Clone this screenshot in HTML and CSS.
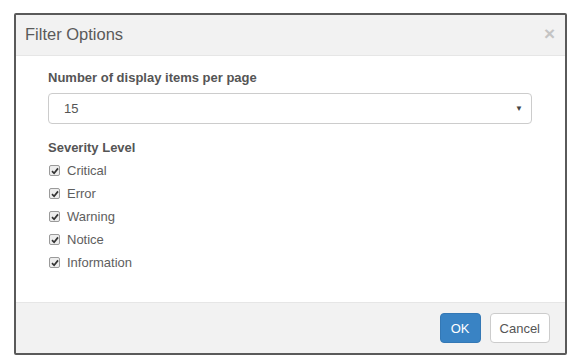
FILE: index.html
```html
<!DOCTYPE html>
<html>
  <head>
    <link rel="stylesheet" href="styles.css">
  </head>
  <body>
  <div class='backdrop'>
    <section class='modal'>
      <header class='modal-header'>
        <h4 class='modal-title'>Filter Options</h4>
        <span class='close'>&times;</span>
      </header>
      <div class='modal-body'>
        <p class='field-label'>Number of display items per page</p>
        <div class='select'>
          <span>15</span>
          <span class='caret'>&#9660;</span>
        </div>
        <p class='field-label severity'>Severity Level</p>
        <ul class='checks'>
          <li><span class='box'><svg width="8" height="8" viewBox="0 0 8 8"><path d="M1 4.2 L3.1 6.3 L7 1.4" fill="none" stroke="#333" stroke-width="1.7"/></svg></span>Critical</li>
          <li><span class='box'><svg width="8" height="8" viewBox="0 0 8 8"><path d="M1 4.2 L3.1 6.3 L7 1.4" fill="none" stroke="#333" stroke-width="1.7"/></svg></span>Error</li>
          <li><span class='box'><svg width="8" height="8" viewBox="0 0 8 8"><path d="M1 4.2 L3.1 6.3 L7 1.4" fill="none" stroke="#333" stroke-width="1.7"/></svg></span>Warning</li>
          <li><span class='box'><svg width="8" height="8" viewBox="0 0 8 8"><path d="M1 4.2 L3.1 6.3 L7 1.4" fill="none" stroke="#333" stroke-width="1.7"/></svg></span>Notice</li>
          <li><span class='box'><svg width="8" height="8" viewBox="0 0 8 8"><path d="M1 4.2 L3.1 6.3 L7 1.4" fill="none" stroke="#333" stroke-width="1.7"/></svg></span>Information</li>
        </ul>
      </div>
      <footer class='modal-footer'>
        <button class='btn btn-primary' type=button>OK</button>
        <button class='btn' type=button>Cancel</button>
      </footer>
    </section>
  </div>
  </body>
</html>
```

FILE: styles.css
```css
* {
  box-sizing: border-box;
}
body {
  margin: 0;
  font-family: "Liberation Sans", Arial, sans-serif;
  background-color: #fff;
  color: #555;
}
.backdrop {
  padding: 13px 0 0 14px;
}
.modal {
  width: 553px;
  height: 342px;
  border: 2px solid #5a5a5a;
  border-radius: 2px;
  background-color: #fff;
  display: flex;
  flex-direction: column;
}
.modal-header {
  height: 41px;
  background-color: #f2f2f2;
  border-bottom: 1px solid #e6e6e6;
  display: flex;
  align-items: center;
  justify-content: space-between;
  padding: 0 10px 0 9px;
}
.modal-title {
  margin: -2px 0 0;
  font-size: 16.5px;
  font-weight: normal;
  color: #5a5a5a;
}
.close {
  font-size: 19px;
  color: #c4c4c4;
  font-weight: bold;
  line-height: 1;
  margin-top: -4px;
}
.modal-body {
  flex: 1;
  padding: 14px 33px 0 32px;
}
.field-label {
  margin: 0 0 7px;
  font-size: 13px;
  font-weight: bold;
  color: #555;
  line-height: 16px;
}
.severity {
  margin-top: 16px;
  margin-bottom: 3px;
}
.select {
  height: 31px;
  border: 1px solid #ccc;
  border-radius: 4px;
  display: flex;
  align-items: center;
  justify-content: space-between;
  padding: 0 8px 0 15px;
  font-size: 13px;
  color: #555;
}
.caret {
  font-size: 8px;
  color: #444;
}
.checks {
  list-style: none;
  margin: 0;
  padding: 0;
}
.checks li {
  height: 23px;
  display: flex;
  align-items: center;
  font-size: 13px;
  color: #5e5e5e;
}
.box {
  width: 11px;
  height: 11px;
  border: 1px solid #9a9a9a;
  border-radius: 2px;
  background-color: #ededed;
  margin: 0 7px 0 1px;
  display: flex;
  align-items: center;
  justify-content: center;
}
.modal-footer {
  height: 51px;
  background-color: #f2f2f2;
  border-top: 1px solid #e6e6e6;
  display: flex;
  align-items: center;
  justify-content: flex-end;
  gap: 9px;
  padding: 0 15px 0 0;
}
.btn {
  height: 30px;
  padding: 0 9px;
  font-family: "Liberation Sans", Arial, sans-serif;
  font-size: 13px;
  color: #555;
  background-color: #fff;
  border: 1px solid #ccc;
  border-radius: 4px;
}
.btn-primary {
  color: #fff;
  background-color: #3983c4;
  border-color: #3478b5;
  padding: 0 10px;
}
```
